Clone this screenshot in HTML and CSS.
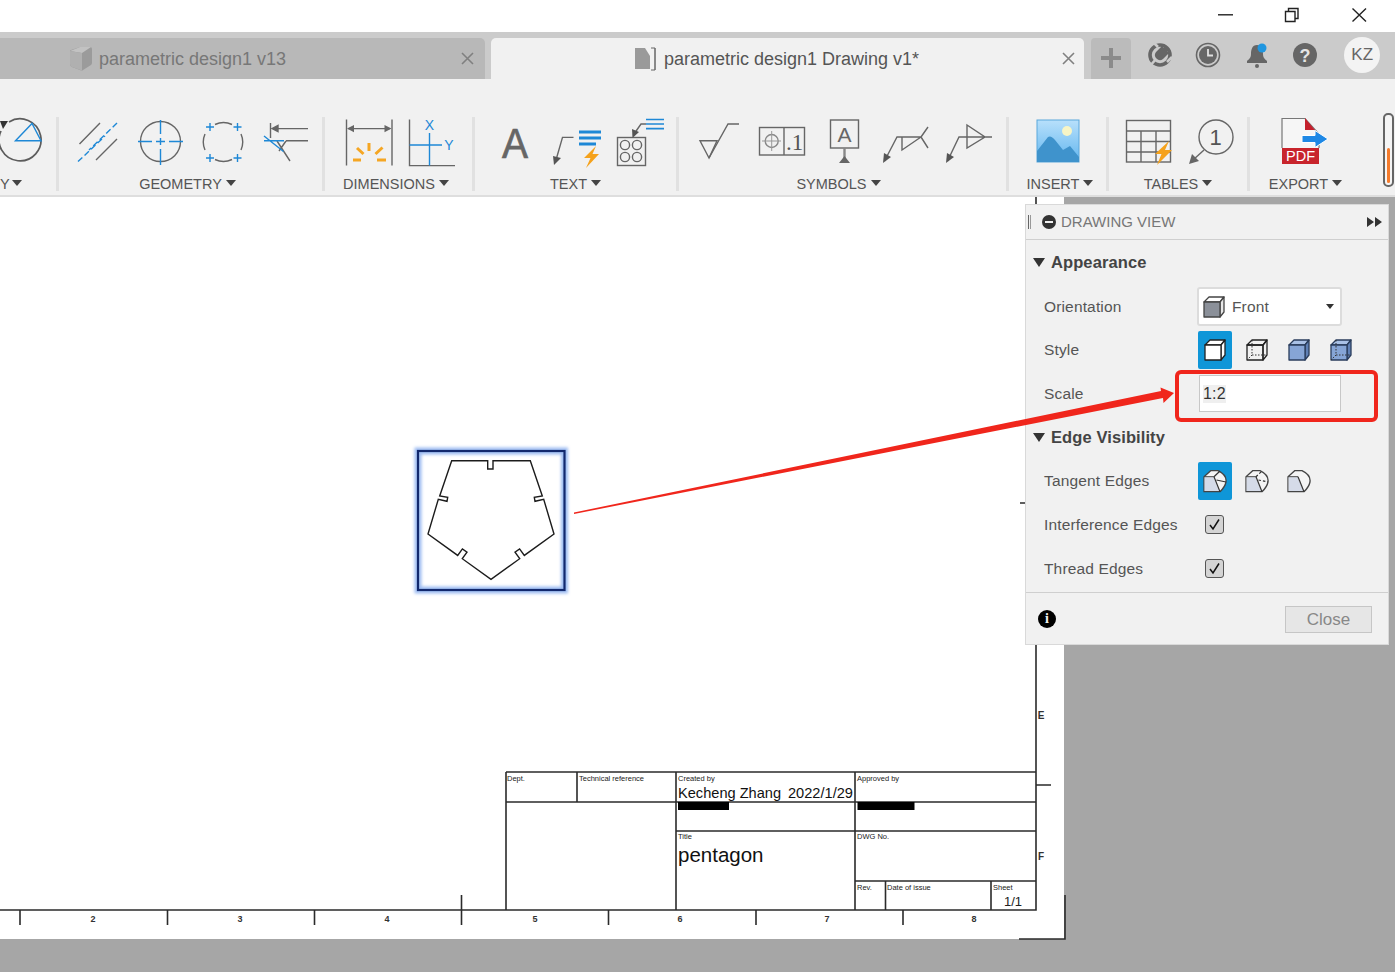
FILE: index.html
```html
<!DOCTYPE html>
<html lang="en">
<head>
<meta charset="utf-8">
<title>parametric design1 Drawing v1</title>
<link rel="stylesheet" href="styles.css">
</head>
<body>
<div class="app">
  <header class="titlebar">
    <svg class="winicon" width="180" height="32" viewBox="1215 0 180 32" fill="none" stroke="#222" stroke-width="1.4">
      <path d="M1218 14.8H1233"/>
      <path d="M1285.5 11.5h9.500v10h-9.500zM1288.5 11.5v-3h9.500v10h-3"/>
      <path d="M1352.5 8.500L1366 21.500M1366 8.500L1352.5 21.500"/>
    </svg>
  </header>

  <nav class="tabbar">
    <div class="tab tab-off">
      <svg class="tabicon" width="24" height="24" viewBox="0 0 24 24"><path d="M1 4Q1 3 2 3L11 0H21Q23 0 23 2V16Q23 17 22 18L14 23Q13 24 11 23L3 20Q1 19 1 17Z" fill="#9b9b9b"/><path d="M1 4L11 0H22L13 6Z" fill="#c2c2c2"/><path d="M1 4L13 6V23.500L3 20Q1 19 1 17Z" fill="#b0b0b0"/></svg>
      <span class="tabtext">parametric design1 v13</span>
      <svg class="tabclose" width="13" height="13" viewBox="0 0 13 13"><path d="M1 1L12 12M12 1L1 12" stroke="#808080" stroke-width="1.6"/></svg>
    </div>
    <div class="tab tab-on">
      <svg class="tabicon" width="22" height="24" viewBox="0 0 22 24"><path d="M0 1H10L15 9V22H0Z" fill="#9a9a9a"/><path d="M16 1H20V23H16M20 1V23" fill="none" stroke="#666" stroke-width="1"/></svg>
      <span class="tabtext">parametric design1 Drawing v1*</span>
      <svg class="tabclose" width="13" height="13" viewBox="0 0 13 13"><path d="M1 1L12 12M12 1L1 12" stroke="#808080" stroke-width="1.6"/></svg>
    </div>
    <div class="tabplus"><svg width="20" height="20" viewBox="0 0 20 20"><path d="M10 0V20M0 10H20" stroke="#8b8b8b" stroke-width="4"/></svg></div>
    <div class="tabtools">
      <svg width="26" height="26" viewBox="0 0 26 26"><circle cx="13" cy="13" r="10" fill="none" stroke="#666" stroke-width="3.6"/><path d="M3 24L9 17M7 1L11 5M25 15L20 20" stroke="#cbcbcb" stroke-width="2.6"/><path d="M9 10L15 4L17 6L19 4L22 7L20 9L22 11L16 17A5 5 0 0 1 9 10Z" fill="#666"/></svg>
      <svg width="26" height="26" viewBox="0 0 26 26"><circle cx="13" cy="13" r="11.5" fill="none" stroke="#666" stroke-width="1.6"/><circle cx="13" cy="13" r="9" fill="#666"/><path d="M13 7V13.500H18" fill="none" stroke="#e0e0e0" stroke-width="1.8"/></svg>
      <svg width="26" height="26" viewBox="0 0 26 26"><path d="M13 3C8 3 7 8 7 12C7 16 5 17 3 19V21H23V19C21 17 19 16 19 12C19 8 18 3 13 3Z" fill="#666"/><circle cx="13" cy="24" r="2" fill="#666"/><circle cx="18" cy="6" r="4.5" fill="#1f96e0"/></svg>
      <svg width="26" height="26" viewBox="0 0 26 26"><circle cx="13" cy="13" r="12" fill="#666"/><text class="helpmark" x="13" y="19.5" text-anchor="middle">?</text></svg>
      <div class="avatar">KZ</div>
    </div>
  </nav>

  <section class="ribbon">
    <div class="group g1">
      <svg width="56" height="57" viewBox="0 117 56 57" fill="none" stroke="#5c5c5c" stroke-width="1.4">
        <path d="M9 122A21 21 0 1 1 1 131" stroke-width="1.7"/>
        <path d="M0 121H8L3 129Z" fill="#333" stroke="none"/>
        <path d="M15.5 140.7L32 123.5L41 140.7Z" stroke="#1e88d6"/>
      </svg>
      <div class="label lb-1"><span>Y</span></div>
    </div>
    <div class="group g2">
      <svg width="263" height="57" viewBox="59 117 263 57" fill="none" stroke="#666" stroke-width="1.4">
        <path d="M79.5 144L100 123M96 160L117 139"/>
        <path d="M117 123L89 150M78 161.6L105 136" stroke="#1e88d6" stroke-dasharray="6 3"/>
        <circle cx="160.5" cy="141.5" r="20"/>
        <path d="M160.5 120V134M160.5 138V145M160.5 149V165M138 141.5H152M156 141.5H165M169 141.5H183" stroke="#1e88d6"/>
        <path d="M215 124.5A20 20 0 0 1 232 124.5M241 134A20 20 0 0 1 241 150M232 159.5A20 20 0 0 1 215 159.5M205 150A20 20 0 0 1 205 134"/>
        <path d="M206 127H214M210 123V131M233.5 127H241.5M237.5 123V131M206 158H214M210 154V162M233.5 158H241.5M237.5 154V162" stroke="#1e88d6"/>
        <path d="M270.5 123V138M273 128.6H308M286 140.7H308M277 141L290 161M286 141L279 151"/>
        <path d="M272 128.6L278 125.5V131.7Z" fill="#666"/>
        <path d="M264 136L283.5 151.5M264 140.7H284" stroke="#1e88d6"/>
      </svg>
      <div class="label lb-2"><span>GEOMETRY</span></div>
    </div>
    <div class="group g3">
      <svg width="147" height="57" viewBox="325 117 147 57" fill="none" stroke="#666" stroke-width="1.4">
        <path d="M346.5 119.5V165.6M392 119.5V165.6M348 128.6H390"/>
        <path d="M347 128.6L354 125V132.2ZM391.5 128.6L384.5 125V132.2Z" fill="#666" stroke="none"/>
        <path d="M369 143V151M357 148L363.5 154M382.5 147.5L375.5 154M353 160H361M377 160H386" stroke="#f5a623" stroke-width="3"/>
        <path d="M409.5 119.5V165.6H455"/>
        <path d="M429.5 133V165.6M409.5 145H442" stroke="#1e88d6"/>
        <text class="axis" x="429.5" y="130" text-anchor="middle">X</text>
        <text class="axis" x="449" y="150" text-anchor="middle">Y</text>
      </svg>
      <div class="label lb-3"><span>DIMENSIONS</span></div>
    </div>
    <div class="group g4">
      <svg width="201" height="57" viewBox="475 117 201 57" fill="none" stroke="#666" stroke-width="1.4">
        <text class="bigA" x="502" y="158" textLength="26" lengthAdjust="spacingAndGlyphs">A</text>
        <path d="M573.5 137.4H562.5L556 160"/>
        <path d="M554 165L553 156L561 158Z" fill="#555" stroke="none"/>
        <path d="M579 132H601M579 138H601M579 144H596" stroke="#1e88d6" stroke-width="3"/>
        <path d="M596 146L584 158H590.5L586 168L599 154H592.5Z" fill="#f5a21c" stroke="none"/>
        <rect x="617.5" y="137.5" width="28" height="28"/>
        <circle cx="625" cy="145" r="4.6"/><circle cx="637" cy="145" r="4.6"/><circle cx="625" cy="157" r="4.6"/><circle cx="637" cy="157" r="4.6"/>
        <path d="M646 124H641L634 134"/>
        <path d="M632.5 138L632 129L639 132Z" fill="#555" stroke="none"/>
        <path d="M646 119.5H664M646 124H664M646 128.6H664" stroke="#1e88d6" stroke-width="1.6"/>
      </svg>
      <div class="label lb-4"><span>TEXT</span></div>
    </div>
    <div class="group g5">
      <svg width="327" height="57" viewBox="679 117 327 57" fill="none" stroke="#666" stroke-width="1.4">
        <path d="M700 140.7H717L709 158Z"/>
        <path d="M709 158L728 124H739"/>
        <rect x="759.5" y="127.5" width="45" height="27.5"/>
        <path d="M784 127.5V155"/>
        <circle cx="771.7" cy="141" r="6.5" stroke="#888"/>
        <path d="M771.7 131V151M762 141H781" stroke="#999" stroke-width="1"/>
        <text class="fcf" x="786" y="150">.1</text>
        <rect x="830.5" y="120" width="28" height="28"/>
        <text class="datum" x="844.5" y="142" text-anchor="middle">A</text>
        <path d="M844.5 148V158" stroke="#888" stroke-width="2.4"/>
        <path d="M839 163H850L844.5 156Z" fill="#666" stroke="none"/>
        <path d="M884.5 161L897 137H921M902 137V150L921 137M921 137L928 127M921 137L928 148"/>
        <path d="M883 163L884 153L891 157Z" fill="#555" stroke="none"/>
        <path d="M947.5 161L959 137H992M967 125L985 137L967 148Z"/>
        <path d="M946 163L947 153L954 157Z" fill="#555" stroke="none"/>
      </svg>
      <div class="label lb-5"><span>SYMBOLS</span></div>
    </div>
    <div class="group g6">
      <svg width="97" height="57" viewBox="1009 117 97 57">
        <defs><linearGradient id="sky" x1="0" y1="0" x2="0" y2="1"><stop offset="0" stop-color="#b8e0fb"/><stop offset="1" stop-color="#62b6ef"/></linearGradient></defs>
        <rect x="1037" y="120" width="42" height="42" fill="url(#sky)" stroke="#5aa7dc"/>
        <circle cx="1067" cy="131" r="5" fill="#f7f5c6"/>
        <path d="M1037 151L1048 137Q1051 135 1055 140L1063 150L1070 146L1079 157V162H1037Z" fill="#3f93cc"/>
      </svg>
      <div class="label lb-6"><span>INSERT</span></div>
    </div>
    <div class="group g7">
      <svg width="138" height="57" viewBox="1109 117 138 57" fill="none" stroke="#666" stroke-width="1.4">
        <rect x="1126.5" y="120.5" width="44" height="41.5"/>
        <path d="M1126.5 131H1170.5M1126.5 141.5H1170.5M1126.5 152H1170.5M1141 131V162M1156 131V162"/>
        <path d="M1169 141L1155 154H1161.5L1157 165L1172 150H1165Z" fill="#f5a21c" stroke="none"/>
        <circle cx="1216" cy="137" r="17"/>
        <text class="balloon" x="1215.5" y="145" text-anchor="middle">1</text>
        <path d="M1204 150L1193 160"/>
        <path d="M1189 164L1192 154L1199 161Z" fill="#666" stroke="none"/>
      </svg>
      <div class="label lb-7"><span>TABLES</span></div>
    </div>
    <div class="group g8">
      <svg width="130" height="57" viewBox="1250 117 130 57">
        <path d="M1282 148V118.5H1305L1319 134V148" fill="#f6f6f6" stroke="#777" stroke-width="1.2"/>
        <path d="M1305 118L1315 130H1305Z" fill="#c4202c"/>
        <rect x="1282" y="148" width="37" height="16" fill="#c8242c"/>
        <text class="pdf" x="1300.5" y="161" text-anchor="middle">PDF</text>
        <path d="M1302 135.5H1315V130.5L1328 139L1315 147.5V142.5H1302Z" fill="#1e88e5" stroke="#fff"/>
      </svg>
      <div class="label lb-8"><span>EXPORT</span></div>
    </div>
    <div class="ribbon-scroll"><div class="ribbon-thumb"></div></div>
  </section>

  <main class="stage">
    <svg class="sheet" width="1395" height="775" viewBox="0 197 1395 775">
      <defs>
        <filter id="glow" x="-10%" y="-10%" width="120%" height="120%"><feGaussianBlur stdDeviation="1.6"/></filter>
      </defs>
      <rect x="0" y="197" width="1064" height="742" fill="#fff"/>
      <g fill="none" stroke="#2b2b2b" stroke-width="1.6">
        <path d="M1036 197V910H0"/>
        <path d="M1065 895V939H1019"/>
        <path d="M1020 503H1036M1036 785H1051"/>
        <path d="M20 910V925M167.500 910V925M314.500 910V925M461.500 895V925M608.500 910V925M756 910V925M903 910V925"/>
        <path d="M506 772H1036M506 802H1036M676 831H1036M855 881H1036"/>
        <path d="M506 772V910M577 772V802M676 772V910M855 772V910M885.500 881V910M991 881V910"/>
      </g>
      <rect x="678" y="802" width="51" height="8" fill="#000"/>
      <rect x="857.500" y="802" width="57" height="8" fill="#000"/>
      <g class="zone">
        <text x="93" y="922" text-anchor="middle">2</text><text x="240" y="922" text-anchor="middle">3</text>
        <text x="387" y="922" text-anchor="middle">4</text><text x="535" y="922" text-anchor="middle">5</text>
        <text x="680" y="922" text-anchor="middle">6</text><text x="827" y="922" text-anchor="middle">7</text>
        <text x="974" y="922" text-anchor="middle">8</text>
        <text class="zone-side" x="1041" y="719" text-anchor="middle">E</text><text class="zone-side" x="1041" y="860" text-anchor="middle">F</text>
      </g>
      <g class="tiny">
        <text x="507" y="781">Dept.</text><text x="579" y="781">Technical reference</text>
        <text x="678" y="781">Created by</text><text x="857" y="781">Approved by</text>
        <text x="678" y="839">Title</text><text x="857" y="839">DWG No.</text>
        <text x="857" y="890">Rev.</text><text x="887" y="890">Date of issue</text><text x="993" y="890">Sheet</text>
      </g>
      <text class="creator" x="678" y="798">Kecheng Zhang</text>
      <text class="creator" x="788" y="798">2022/1/29</text>
      <text class="title" x="678" y="862">pentagon</text>
      <text class="sheetno" x="1004" y="906">1/1</text>

      <rect x="418" y="451" width="146.500" height="139" fill="#fff"/>
      <rect x="418" y="451" width="146.500" height="139" fill="none" stroke="#9dbcf2" stroke-width="7" filter="url(#glow)"/>
      <rect x="418" y="451" width="146.500" height="139" fill="none" stroke="#12296e" stroke-width="2.200"/>
      <path class="pent" d="M451.700 460.700H487.700V469H493V460.700H530.300L542.300 496L534.300 497.300L535 501.300L543.700 499.300L554 534L524.300 555.400L519.600 548.900L515 552.200L519.700 558.700L491 579.300L462.300 558.700L467 552.200L462.400 548.900L457.700 555.400L428 534L438.300 499.300L447 501.300L447.700 497.300L439.700 496Z"/>
    </svg>

    <aside class="panel">
      <div class="panel-head">
        <span class="grip"></span>
        <span class="minus"></span>
        <span class="panel-title">DRAWING VIEW</span>
        <svg class="ff" width="15" height="10" viewBox="0 0 15 10"><path d="M0 0L7 5L0 10ZM8 0L15 5L8 10Z" fill="#333"/></svg>
      </div>
      <div class="panel-body">
        <div class="row"><span class="tri"></span><span class="section">Appearance</span></div>
        <div class="row prop">
          <span class="prop-label">Orientation</span>
          <div class="dropdown">
            <svg width="24" height="24" viewBox="0 0 24 24"><use href="#c-base" class="cube-grey"/></svg>
            <span>Front</span><i class="caret"></i>
          </div>
        </div>
        <div class="row prop">
          <span class="prop-label">Style</span>
          <div class="tools">
            <span class="tool on"><svg width="24" height="24" viewBox="0 0 24 24"><use href="#c-base" class="cube-white"/></svg></span>
            <span class="tool"><svg width="24" height="24" viewBox="0 0 24 24"><use href="#c-base" class="cube-none"/><path class="hidden-line" d="M7 2V17H22M7 17L2 22"/></svg></span>
            <span class="tool"><svg width="24" height="24" viewBox="0 0 24 24"><use href="#c-base" class="cube-blue"/></svg></span>
            <span class="tool"><svg width="24" height="24" viewBox="0 0 24 24"><use href="#c-base" class="cube-blue"/><path class="hidden-line" d="M7 2V17H22M7 17L2 22"/></svg></span>
          </div>
        </div>
        <div class="row prop">
          <span class="prop-label">Scale</span>
          <div class="scale"><span>1:2</span></div>
        </div>
        <div class="row"><span class="tri"></span><span class="section">Edge Visibility</span></div>
        <div class="row prop">
          <span class="prop-label">Tangent Edges</span>
          <div class="tools">
            <span class="tool on"><svg width="24" height="24" viewBox="0 0 24 24"><use href="#t-base"/><path class="edge" d="M11 7.700L17 2M11 7.700L17 22.700M13.500 11L23 13"/></svg></span>
            <span class="tool"><svg width="24" height="24" viewBox="0 0 24 24"><use href="#t-base"/><path class="edge dash" d="M11 7.700L17 2M13.500 11L23 13"/><path class="edge" d="M11 7.700L17 22.700"/></svg></span>
            <span class="tool"><svg width="24" height="24" viewBox="0 0 24 24"><use href="#t-base"/><path class="edge" d="M11 7.700L17 22.700"/></svg></span>
          </div>
        </div>
        <div class="row prop">
          <span class="prop-label">Interference Edges</span>
          <span class="check"><svg width="13" height="13" viewBox="0 0 13 13"><path d="M2 7L5 11L11 1.500" fill="none" stroke="#111" stroke-width="1.500"/></svg></span>
        </div>
        <div class="row prop">
          <span class="prop-label">Thread Edges</span>
          <span class="check"><svg width="13" height="13" viewBox="0 0 13 13"><path d="M2 7L5 11L11 1.500" fill="none" stroke="#111" stroke-width="1.500"/></svg></span>
        </div>
      </div>
      <div class="panel-foot">
        <span class="info">i</span>
        <span class="close-btn">Close</span>
      </div>
    </aside>

    <svg class="annot" width="1395" height="775" viewBox="0 197 1395 775">
      <rect class="annot-box" x="1177" y="372" width="199" height="48" rx="4"/>
      <path class="annot-arrow" d="M574 512.500L1161 391L1160.500 387.500L1174 393L1163.500 403L1163 398L574 514Z"/>
    </svg>
  </main>
</div>

<svg class="defs" width="0" height="0">
  <defs>
    <g id="c-base">
      <path class="c-top" d="M2 7L7 2H22L18 7Z"/>
      <path class="c-side" d="M18 7L22 2V17L18 22Z"/>
      <rect class="c-front" x="2" y="7" width="16" height="15"/>
    </g>
    <g id="t-base">
      <path d="M1 22.700V7.700L7.700 1.700H15Q24 6 23 13Q22 18 17 22.700Z" fill="#f4f4f4" stroke="#444" stroke-width="1.300"/>
      <path d="M1.600 8.300H10.600L16 22H1.600Z" fill="#d5dbe8"/>
      <path d="M1 7.700H11" fill="none" stroke="#444" stroke-width="1"/>
    </g>
  </defs>
</svg>
</body>
</html>
```

FILE: styles.css
```css
* { box-sizing: border-box; }
html, body { margin: 0; padding: 0; }
body { width: 1395px; height: 972px; overflow: hidden; font-family: "Liberation Sans", Arial, sans-serif; background: #a6a6a6; }
.app { width: 1395px; height: 972px; display: flex; flex-direction: column; }
.defs { position: absolute; }

.titlebar { height: 32px; background: #fff; display: flex; justify-content: flex-end; flex: none; }
.winicon { display: block; }

.tabbar { height: 47px; flex: none; background: #cbcbcb; padding-top: 6px; display: flex; }
.tab { height: 41px; display: flex; align-items: center; border-radius: 0 5px 0 0; }
.tab-off { width: 485px; background: #b8b8b8; padding: 0 11px 0 69px; color: #777; }
.tab-on { width: 593px; margin-left: 6px; background: #f1f1f1; padding: 0 9px 0 144px; color: #555; border-radius: 5px 5px 0 0; }
.tabicon { flex: none; }
.tabtext { font-size: 18px; margin: 2px 0 0 6px; white-space: nowrap; }
.tab-on .tabtext { margin-left: 7px; }
.tabclose { margin-left: auto; flex: none; }
.tabplus { width: 40px; height: 41px; margin-left: 7px; padding-bottom: 2px; background: #bbb; border-radius: 4px 4px 0 0; display: flex; align-items: center; justify-content: center; }
.tabtools { display: flex; align-items: center; height: 41px; padding-left: 16px; gap: 22.300px; margin-top: -4px; }
.avatar { width: 36px; height: 36px; border-radius: 50%; background: #f3f3f3; color: #666; font-size: 17px; display: flex; align-items: center; justify-content: center; margin-left: 4px; }
.helpmark { font: bold 18px "Liberation Sans", sans-serif; fill: #e4e4e4; }

.ribbon { height: 118px; flex: none; background: #f1f1f1; border-bottom: 2px solid #dedede; padding-top: 38px; display: flex; align-items: flex-start; }
.group { height: 74px; flex: none; border-right: 3px solid #e1e1e1; display: flex; flex-direction: column; overflow: hidden; }
.group svg { display: block; flex: none; }
.g1 { width: 59px; }
.g2 { width: 266px; }
.g3 { width: 150px; }
.g4 { width: 204px; }
.g5 { width: 330px; }
.g6 { width: 100px; }
.g7 { width: 141px; }
.g8 { width: 130px; border-right: 0; }
.label { height: 17px; font-size: 14.5px; line-height: 20px; color: #555; display: flex; justify-content: center; white-space: nowrap; }
.label span::after { content: ""; display: inline-block; border: 5px solid transparent; border-top: 6px solid #444; border-bottom: 0; margin-left: 4px; vertical-align: 3px; }
.lb-1 { justify-content: flex-start; }
.lb-1 span::after { margin-left: 2px; }
.lb-2 { padding-right: 6px; }
.lb-3 { padding-right: 5px; }
.lb-5 { padding-right: 8px; }
.lb-6 { padding-left: 5px; }
.lb-8 { padding-right: 19px; }
.axis { font: 14px "Liberation Sans", sans-serif; fill: #1e88d6; stroke: none; }
.bigA { font: 43px "Liberation Sans", sans-serif; fill: #666; stroke: #666; stroke-width: 0.7; }
.fcf { font: 23px "Liberation Serif", serif; fill: #555; stroke: none; }
.datum { font: 21px "Liberation Sans", sans-serif; fill: #666; stroke: none; }
.balloon { font: 22px "Liberation Sans", sans-serif; fill: #555; stroke: none; }
.pdf { font: 14.5px "Liberation Sans", sans-serif; fill: #fff; }
.ribbon-scroll { width: 11px; height: 74px; margin: -4px 0 0 3px; border: 2px solid #666; border-radius: 5px; background: #f5f5f5; padding: 33px 2px 2px; flex: none; }
.ribbon-thumb { height: 100%; background: #f47b2c; border-radius: 2px; }

.stage { position: relative; flex: 1; overflow: hidden; background: #a6a6a6; }
.sheet, .annot { display: block; }
.annot { position: absolute; left: 0; top: 0; pointer-events: none; }
.annot-box { fill: none; stroke: #f0261c; stroke-width: 4; }
.annot-arrow { fill: #f0261c; }
.pent { fill: none; stroke: #1c1c1c; stroke-width: 1.400; stroke-linejoin: miter; }
.zone text { font: bold 9px "Liberation Sans", sans-serif; fill: #333; }
.zone .zone-side { font-size: 10px; }
.tiny text { font: 7.500px "Liberation Sans", sans-serif; fill: #222; }
.creator { font: 14.600px "Liberation Sans", sans-serif; fill: #111; }
.title { font: 20.500px "Liberation Sans", sans-serif; fill: #111; }
.sheetno { font: 13px "Liberation Sans", sans-serif; fill: #222; }

.panel { position: absolute; left: 1025px; top: 7px; width: 364px; height: 441px; background: #f1f1f1; border: 1px solid #d9d9d9; color: #555; }
.panel-head { height: 35px; border-bottom: 1px solid #cfcfcf; display: flex; align-items: center; padding: 0 6px 0 2px; }
.grip { width: 3px; height: 14px; border-left: 1px solid #666; border-right: 1px solid #999; }
.minus { width: 14px; height: 14px; margin-left: 11px; border-radius: 50%; background: #333; display: flex; align-items: center; justify-content: center; }
.minus::after { content: ""; width: 8px; height: 2px; background: #f1f1f1; }
.panel-title { margin: 0 0 2px 5px; font-size: 15px; color: #777; }
.ff { margin-left: auto; }
.panel-body { height: 352.600px; padding-top: 1px; display: grid; grid-template-rows: repeat(8, 43.700px); align-content: start; border-bottom: 1px solid #cfcfcf; }
.row { display: flex; align-items: center; padding-left: 7px; }
.tri { border: 6px solid transparent; border-top: 9px solid #333; border-bottom: 0; }
.section { margin-left: 6px; font-size: 16.500px; letter-spacing: 0.1px; font-weight: bold; color: #444; }
.prop { padding-left: 18px; font-size: 15.500px; letter-spacing: 0.15px; }
.prop-label { width: 153px; flex: none; white-space: nowrap; color: #555; }
.dropdown { width: 145px; height: 39px; background: #fff; border: 2px solid #dcdcdc; border-radius: 3px; display: flex; align-items: center; padding-left: 3px; gap: 6px; font-size: 15.500px; }
.caret { margin-left: auto; margin-right: 6px; border: 4.500px solid transparent; border-top: 5px solid #333; border-bottom: 0; }
.tools { display: flex; gap: 8px; margin-left: 1px; }
.tool { width: 34px; height: 38px; display: flex; align-items: center; justify-content: center; border-radius: 2px; }
.tool.on { background: #0f96d8; }
.check { width: 19px; height: 19px; margin-left: 8px; background: #d4d4d4; border: 1.500px solid #555; border-radius: 3px; display: flex; align-items: center; justify-content: center; }
.scale { width: 142px; height: 37px; margin-left: 2px; background: #fff; border: 1px solid #c8c8c8; display: flex; align-items: center; padding-left: 3px; font-size: 16px; color: #333; }
.scale span { background: #efefef; }
.cube-white, .cube-none, .cube-grey, .cube-blue { stroke: #222; stroke-width: 1.300; stroke-linejoin: round; }
.c-top { fill: var(--top); }
.c-side { fill: var(--side); }
.c-front { fill: var(--front); }
.cube-white { --top: #fff; --side: #fff; --front: #fff; }
.cube-none { --top: none; --side: none; --front: none; }
.cube-grey { --top: #fff; --side: #e8e8e8; --front: #8b9099; stroke: #444; }
.cube-blue { --top: #a9c1e6; --side: #5f80b5; --front: #86a5d6; stroke: #2a3d5c; }
.hidden-line { fill: none; stroke: #333; stroke-width: 1; stroke-dasharray: 1.500 1.500; }
.edge { fill: none; stroke: #333; stroke-width: 1.200; }
.edge.dash { stroke-dasharray: 2.500 2; }
.panel-foot { height: 51px; padding: 2px 16px 0 12px; display: flex; align-items: center; justify-content: space-between; }
.info { width: 18px; height: 18px; border-radius: 50%; background: #000; color: #f1f1f1; font: bold 14px/18px "Liberation Serif", serif; text-align: center; }
.close-btn { width: 87px; height: 27px; background: #e6e6e6; border: 1px solid #c6c6c6; color: #888; font-size: 17px; line-height: 25px; text-align: center; }
```
